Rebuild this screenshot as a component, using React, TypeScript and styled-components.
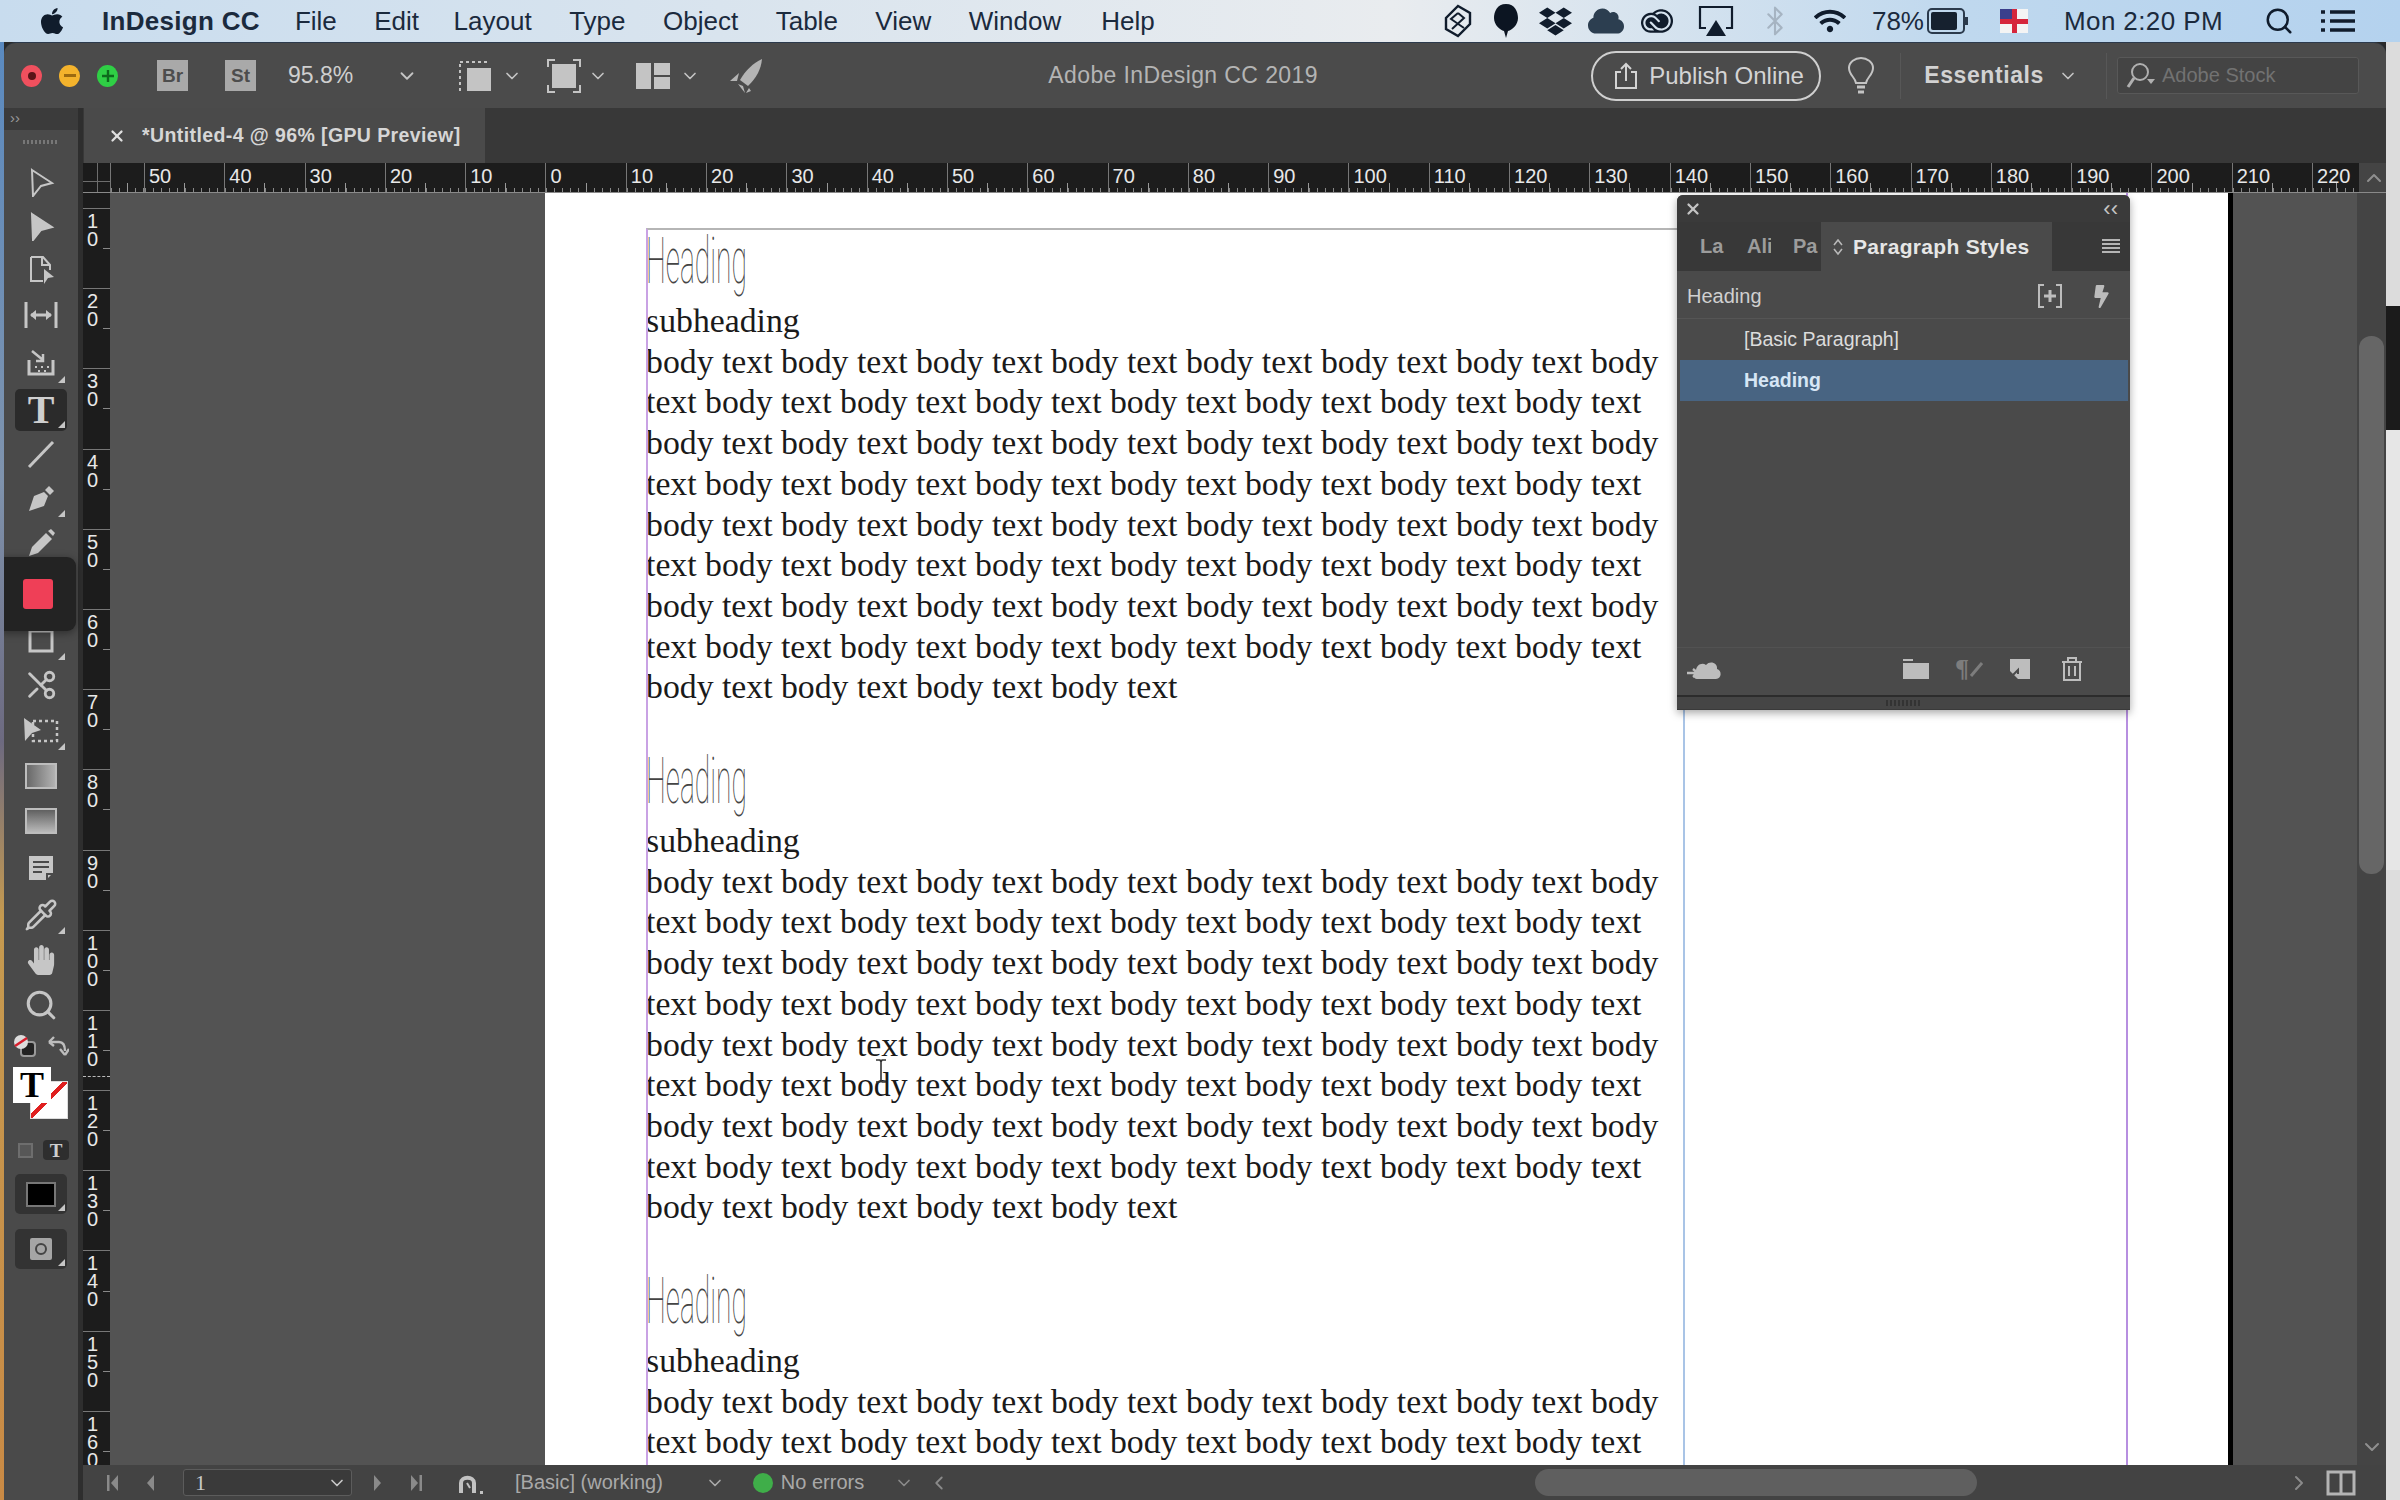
import { ReactNode } from 'react'
import styled, { createGlobalStyle } from 'styled-components'
import { FaApple, FaCloud, FaDropbox, FaHandPaper, FaWifi, FaBolt } from 'react-icons/fa'
import { SiAdobecreativecloud } from 'react-icons/si'
import { Bluetooth, ChevronDown, ChevronLeft, ChevronRight, ChevronUp, Pipette, Scissors, Search, X } from 'lucide-react'

const GlobalStyle = createGlobalStyle`
  html, body { margin: 0; padding: 0; background: #2a2a2a; }
  * { box-sizing: border-box; }
`

const SANS = `"Liberation Sans", Arial, sans-serif`
const SERIF = `"Liberation Serif", "Times New Roman", serif`

const Root = styled.div`
  width: 2400px;
  height: 1500px;
  display: flex;
  flex-direction: column;
  overflow: hidden;
  font-family: ${SANS};
`

/* mac menu bar */
const MenuBar = styled.div`
  height: 42px;
  flex: none;
  display: flex;
  align-items: center;
  padding-left: 37px;
  color: #1b2a3d;
  font-size: 26px;
  background: linear-gradient(90deg, #c8dcee 0%, #d9e4ee 30%, #e9ecef 58%, #bfd8ee 82%, #b4d2ee 100%);
`
const MenuItem = styled.span<{ $bold?: boolean; $ml?: number; $wide?: boolean }>`
  margin-left: ${p => p.$ml ?? 37.5}px;
  font-weight: ${p => (p.$bold ? 700 : 400)};
  letter-spacing: ${p => (p.$wide ? 0.4 : p.$bold ? 0.3 : 0)}px;
  white-space: nowrap;
`
const MenuRight = styled.div`
  margin-left: auto;
  margin-right: 43px;
  display: flex;
  align-items: center;
  height: 100%;
`
const MenuIcon = styled.span<{ $w: number; $ml?: number }>`
  width: ${p => p.$w}px;
  margin-left: ${p => p.$ml ?? 0}px;
  display: flex;
  justify-content: center;
  align-items: center;
  color: #101c2c;
`

const Desk = styled.div`
  flex: 1;
  min-height: 0;
  display: flex;
`
const LeftStrip = styled.div`
  width: 4px;
  flex: none;
  background: linear-gradient(180deg, #5a8ac0 0%, #7f93ad 30%, #6d6a80 48%, #c59a50 60%, #c98a45 100%);
`
const RightStrip = styled.div`
  width: 14px;
  flex: none;
  display: flex;
  flex-direction: column;
`
const StripBand = styled.div<{ $h: number; $c: string }>`
  height: ${p => p.$h}px;
  background: ${p => p.$c};
  flex: none;
`
const Window = styled.div`
  flex: 1;
  min-width: 0;
  display: flex;
  flex-direction: column;
  background: #2e2e2e;
  border-radius: 12px 12px 0 0;
  overflow: hidden;
  border-top: 1px solid #2c3a4c;
`

/* app bar */
const AppBar = styled.div`
  height: 65px;
  flex: none;
  display: flex;
  align-items: center;
  background: #4b4b4b;
`
const Traffic = styled.span<{ $c: string; $ml: number }>`
  width: 21px;
  height: 22px;
  border-radius: 50%;
  background: ${p => p.$c};
  margin-left: ${p => p.$ml}px;
  flex: none;
  display: flex;
  align-items: center;
  justify-content: center;
`
const Bridge = styled.span<{ $ml: number }>`
  width: 31px;
  height: 31px;
  flex: none;
  margin-left: ${p => p.$ml}px;
  background: #a9a9a9;
  color: #4d4d4d;
  font-size: 19px;
  font-weight: 700;
  display: flex;
  align-items: center;
  justify-content: center;
`
const ZoomValue = styled.span`
  margin-left: 32px;
  width: 108px;
  color: #cfcfcf;
  font-size: 23px;
`
const BarIcon = styled.span<{ $ml: number }>`
  margin-left: ${p => p.$ml}px;
  display: flex;
  align-items: center;
  flex: none;
  color: #c4c4c4;
`
const Title = styled.div`
  flex: 1;
  margin-left: 12px;
  text-align: center;
  color: #b4b4b4;
  font-size: 23px;
  letter-spacing: 0.4px;
`
const PublishButton = styled.div`
  width: 230px;
  height: 50px;
  flex: none;
  border: 2px solid #cfcfcf;
  border-radius: 25px;
  display: flex;
  align-items: center;
  padding-left: 20px;
  gap: 10px;
  color: #d4d4d4;
  font-size: 24px;
`
const BarDivider = styled.span<{ $ml: number }>`
  width: 1px;
  height: 46px;
  margin-left: ${p => p.$ml}px;
  background: #575757;
  flex: none;
`
const Essentials = styled.span`
  margin-left: 23px;
  color: #d2d2d2;
  font-size: 23px;
  font-weight: 700;
  letter-spacing: 0.6px;
`
const StockSearch = styled.div`
  width: 242px;
  height: 37px;
  margin-left: 10px;
  margin-right: 27px;
  flex: none;
  display: flex;
  align-items: center;
  padding-left: 8px;
  gap: 6px;
  background: #444444;
  border: 1px solid #585858;
  border-radius: 3px;
  color: #727272;
  font-size: 20px;
`

/* left tools */
const Workspace = styled.div`
  flex: 1;
  min-height: 0;
  display: flex;
`
const ToolPanel = styled.div`
  width: 74px;
  flex: none;
  position: relative;
  display: flex;
  flex-direction: column;
  align-items: center;
  background: #4a4a4a;
  margin-right: 5px;
`
const ToolHead = styled.div`
  width: 100%;
  height: 22px;
  background: #3b3b3b;
  color: #9a9a9a;
  font-size: 15px;
  line-height: 20px;
  padding-left: 6px;
  flex: none;
`
const ToolGrip = styled.div`
  width: 36px;
  height: 4px;
  margin: 10px 0 16px;
  flex: none;
  background: repeating-linear-gradient(90deg, #777 0 2px, transparent 2px 4px);
`
const Tool = styled.div<{ $h: number; $active?: boolean }>`
  width: 52px;
  height: ${p => p.$h}px;
  flex: none;
  position: relative;
  display: flex;
  align-items: center;
  justify-content: center;
  color: #c6c6c6;
  background: ${p => (p.$active ? '#2b2b2b' : 'transparent')};
  border-radius: 5px;
`
const Corner = styled.span`
  position: absolute;
  right: 2px;
  bottom: 3px;
  width: 0;
  height: 0;
  border-left: 7px solid transparent;
  border-bottom: 7px solid #c6c6c6;
`
const TypeGlyph = styled.span<{ $size: number; $c?: string }>`
  font-family: ${SERIF};
  font-weight: 700;
  font-size: ${p => p.$size}px;
  line-height: 1;
  color: ${p => p.$c ?? '#cfcfcf'};
`
const ToolSpacer = styled.div<{ $h: number }>`
  height: ${p => p.$h}px;
  flex: none;
`
const Mirror = styled.span`
  display: flex;
  transform: scaleX(-1);
`
const Swatch = styled.div`
  position: absolute;
  left: -4px;
  top: 449px;
  width: 76px;
  height: 74px;
  background: #232323;
  border-radius: 0 9px 9px 0;
  display: flex;
  align-items: center;
  justify-content: center;
  box-shadow: 0 2px 8px rgba(0, 0, 0, 0.4);
`
const SwatchFill = styled.span`
  width: 30px;
  height: 30px;
  background: #ef3f57;
  border-radius: 3px;
`
const MiniRow = styled.div<{ $h: number }>`
  width: 56px;
  height: ${p => p.$h}px;
  flex: none;
  display: flex;
  align-items: center;
  justify-content: space-between;
  color: #bdbdbd;
`
const FillStroke = styled.div`
  width: 56px;
  height: 64px;
  flex: none;
  position: relative;
  margin-top: 2px;
`
const StrokeBox = styled.span`
  position: absolute;
  left: 17px;
  top: 14px;
  width: 38px;
  height: 38px;
  background: linear-gradient(135deg, #fff 0 44%, #e02020 44% 52%, #fff 52% 100%);
  border: 1px solid #ddd;
`
const FillBox = styled.span`
  position: absolute;
  left: 0;
  top: 0;
  width: 38px;
  height: 36px;
  background: #fff;
  display: flex;
  align-items: center;
  justify-content: center;
`
const ModeBox = styled.span<{ $dark?: boolean }>`
  width: 26px;
  height: 20px;
  border-radius: 4px;
  display: flex;
  align-items: center;
  justify-content: center;
  background: ${p => (p.$dark ? '#2e2e2e' : 'transparent')};
`
const ModeEmpty = styled.span`
  width: 15px;
  height: 15px;
  margin-left: 5px;
  border: 2px solid #6e6e6e;
  background: #575757;
`
const DarkTool = styled.div<{ $mt: number }>`
  width: 52px;
  height: 40px;
  flex: none;
  margin-top: ${p => p.$mt}px;
  border-radius: 5px;
  background: #333333;
  position: relative;
  display: flex;
  align-items: center;
  justify-content: center;
`
const BlackBox = styled.span`
  width: 30px;
  height: 25px;
  background: #000;
  border: 2px solid #777;
`
const ViewBox = styled.span`
  width: 22px;
  height: 22px;
  background: #a5a5a5;
  border-radius: 2px;
  display: flex;
  align-items: center;
  justify-content: center;
  color: #444;
`

/* document area */
const Main = styled.div`
  flex: 1;
  min-width: 0;
  display: flex;
  flex-direction: column;
`
const TabRow = styled.div`
  height: 55px;
  flex: none;
  display: flex;
  padding-left: 1px;
  background: #383838;
`
const DocTab = styled.div`
  width: 401px;
  display: flex;
  align-items: center;
  padding-left: 24px;
  gap: 16px;
  background: #4a4a4a;
  color: #d6d6d6;
  font-size: 19.5px;
  font-weight: 700;
  letter-spacing: 0.4px;
`
const RulerRow = styled.div`
  height: 30px;
  flex: none;
  display: flex;
  background: #1c1c1c;
  border-bottom: 1px solid #8a8a8a;
  overflow: hidden;
`
const RulerCorner = styled.div`
  width: 27px;
  flex: none;
  background:
    linear-gradient(#777, #777) 0 18px / 100% 1px no-repeat,
    linear-gradient(#777, #777) 14px 0 / 1px 100% no-repeat,
    #1c1c1c;
  opacity: 0.9;
`
const HCell = styled.div<{ $w: number }>`
  width: ${p => p.$w}px;
  flex: none;
  padding-left: 4px;
  border-left: 1px solid #777;
  color: #e8e8e8;
  font-size: 20px;
  line-height: 27px;
  white-space: nowrap;
  background:
    linear-gradient(#999, #999) 50% 100% / 1px 9px no-repeat,
    repeating-linear-gradient(90deg, #888 0 1px, transparent 1px 8px) 0 100% / 100% 4px no-repeat;
`
const CanvasRow = styled.div`
  flex: 1;
  min-height: 0;
  display: flex;
`
const VRuler = styled.div`
  width: 27px;
  flex: none;
  position: relative;
  overflow: hidden;
  background: #1c1c1c;
  padding-top: 15px;
`
const VCell = styled.div`
  height: 80.2px;
  border-top: 1px solid #777;
  padding-top: 3px;
  padding-left: 4px;
  color: #e8e8e8;
  font-size: 20px;
  line-height: 18px;
  background: linear-gradient(#888, #888) 100% 50% / 7px 1px no-repeat;
`
const Digit = styled.div``
const CursorMark = styled.div`
  position: absolute;
  left: 0;
  right: 0;
  top: 883px;
  border-top: 1px dashed #bbb;
`
const Pasteboard = styled.div`
  flex: 1;
  min-width: 0;
  position: relative;
  overflow: hidden;
  display: flex;
  padding-left: 435px;
  background: #535353;
`
const Page = styled.div`
  width: 1688px;
  height: 100%;
  flex: none;
  display: flex;
  align-items: stretch;
  padding-left: 101px;
  padding-top: 35px;
  background: #fff;
  border-right: 5px solid #000;
`
const TextFrame = styled.div`
  width: 1039px;
  flex: none;
  overflow: hidden;
  border-left: 2px solid #c9a2e4;
  border-top: 2px solid #b5b5b5;
  border-right: 2px solid #a9c4e6;
`
const MarginColumn = styled.div`
  width: 443px;
  flex: none;
  margin-top: -35px;
  border-right: 2px solid #b78fe0;
`
const Block = styled.div`
  margin-bottom: 42px;
  font-family: ${SERIF};
  font-size: 33.75px;
  line-height: 40.7px;
  color: #1a1a1a;
  white-space: nowrap;
  margin-left: -2px;
`
const HeadingText = styled.div`
  height: 71px;
  font-family: Roboto, ${SANS};
  font-weight: 100;
  font-size: 64px;
  line-height: 63px;
  color: #444444;
  transform: scaleX(0.44);
  transform-origin: 0 0;
`
const IBeam = styled.svg`
  position: absolute;
  left: 764px;
  top: 866px;
`
const VScroll = styled.div`
  width: 29px;
  flex: none;
  position: relative;
  display: flex;
  justify-content: center;
  background: #444444;
  color: #8f8f8f;
`
const VThumb = styled.div`
  position: absolute;
  left: 2px;
  right: 2px;
  top: 143px;
  height: 538px;
  border-radius: 12px;
  background: #666666;
`
const ArrowSlot = styled.span`
  position: absolute;
  bottom: 2px;
`
const RulerEnd = styled.div`
  width: 29px;
  flex: none;
  display: flex;
  align-items: center;
  justify-content: center;
  background: #444;
  color: #8f8f8f;
`
const StatusBar = styled.div`
  height: 35px;
  flex: none;
  display: flex;
  align-items: center;
  background: #434343;
  color: #a8a8a8;
  font-size: 20px;
`
const StatusItem = styled.span<{ $ml: number }>`
  margin-left: ${p => p.$ml}px;
  flex: none;
  display: flex;
  align-items: center;
  color: #8a8a8a;
`
const PageBox = styled.div`
  width: 169px;
  height: 27px;
  margin-left: 28px;
  flex: none;
  display: flex;
  align-items: center;
  justify-content: space-between;
  padding: 0 4px 0 11px;
  border: 1px solid #5c5c5c;
  border-radius: 3px;
  background: #3a3a3a;
  color: #c8c8c8;
  font-family: ${SERIF};
  font-size: 22px;
`
const StatusText = styled.span<{ $ml: number }>`
  margin-left: ${p => p.$ml}px;
  flex: none;
  color: #a9a9a9;
`
const GreenDot = styled.span`
  width: 20px;
  height: 20px;
  margin-left: 28px;
  flex: none;
  border-radius: 50%;
  background: #3fae49;
`
const HThumb = styled.div`
  width: 442px;
  height: 27px;
  margin-left: 585px;
  flex: none;
  border-radius: 14px;
  background: #5f5f5f;
`

/* floating paragraph styles panel */
const StylesPanel = styled.div`
  position: absolute;
  left: 1567px;
  top: 2px;
  width: 453px;
  height: 515px;
  display: flex;
  flex-direction: column;
  background: #4a4a4a;
  border-radius: 6px 6px 2px 2px;
  box-shadow: 0 3px 8px rgba(0, 0, 0, 0.35);
  color: #d8d8d8;
`
const PanelTop = styled.div`
  height: 27px;
  flex: none;
  display: flex;
  align-items: center;
  justify-content: space-between;
  padding: 0 12px 0 7px;
  background: #3a3a3a;
  border-radius: 6px 6px 0 0;
  color: #c4c4c4;
  font-size: 22px;
`
const PanelTabs = styled.div`
  height: 49px;
  flex: none;
  display: flex;
  align-items: center;
  background: #383838;
`
const SideTab = styled.span<{ $w: number; $pl: number }>`
  width: ${p => p.$w}px;
  padding-left: ${p => p.$pl}px;
  flex: none;
  color: #9c9c9c;
  font-size: 20px;
  font-weight: 700;
  overflow: hidden;
`
const ActiveTab = styled.div`
  width: 231px;
  height: 100%;
  flex: none;
  display: flex;
  align-items: center;
  padding-left: 11px;
  gap: 9px;
  background: #4a4a4a;
  color: #e6e6e6;
  font-size: 21px;
  font-weight: 700;
  letter-spacing: 0.3px;
  white-space: nowrap;
`
const Burger = styled.span`
  margin-left: auto;
  margin-right: 10px;
  width: 18px;
  height: 15px;
  background: repeating-linear-gradient(180deg, #b5b5b5 0 2px, transparent 2px 4px);
`
const CurrentRow = styled.div`
  height: 48px;
  flex: none;
  display: flex;
  align-items: center;
  padding-left: 10px;
  padding-top: 3px;
  border-bottom: 1px solid #555;
  font-size: 20px;
  color: #d0d0d0;
`
const RowIcon = styled.span<{ $ml?: number }>`
  margin-left: ${p => p.$ml ?? 0}px;
  display: flex;
  align-items: center;
  flex: none;
  color: #bcbcbc;
`
const StyleRow = styled.div<{ $selected?: boolean }>`
  height: 41px;
  flex: none;
  display: flex;
  align-items: center;
  padding-left: 64px;
  margin: 0 2px 0 3px;
  font-size: 19.5px;
  font-weight: ${p => (p.$selected ? 700 : 400)};
  color: ${p => (p.$selected ? '#d6e6f5' : '#dcdcdc')};
  background: ${p => (p.$selected ? '#486482' : 'transparent')};
`
const PanelFooter = styled.div`
  margin-top: auto;
  height: 48px;
  flex: none;
  display: flex;
  align-items: center;
  padding-left: 10px;
  padding-bottom: 5px;
  border-top: 1px solid #525252;
  color: #bdbdbd;
`
const PanelResize = styled.div`
  height: 15px;
  flex: none;
  display: flex;
  justify-content: center;
  padding-top: 3px;
  background: #454545;
  border-top: 2px solid #2c2c2c;
  border-bottom: 1px solid #3a3a3a;
`
const ResizeGrip = styled.span`
  width: 36px;
  height: 6px;
  background: repeating-linear-gradient(90deg, #333 0 2px, transparent 2px 4px);
`
const Pilcrow = styled.span`
  font-family: ${SERIF};
  font-size: 26px;
  font-weight: 700;
  color: #7d7d7d;
  line-height: 1;
`

function Ico({ size = 30, w, h, children }: { size?: number; w?: number; h?: number; children: ReactNode }) {
  const width = w ?? size
  const height = h ?? size
  return (
    <svg width={width} height={height} viewBox={`0 0 ${width} ${height}`} fill="none" stroke="currentColor" strokeWidth={2}>
      {children}
    </svg>
  )
}

const SelectIcon = ({ filled }: { filled?: boolean }) => (
  <Ico><path d="M6 3 L26 16 L15 19 L7 29 Z" fill={filled ? 'currentColor' : 'none'} /></Ico>
)
const PageIcon = () => (
  <Ico>
    <path d="M5 3 H17 L24 11 V16 M5 3 V27 H17" />
    <path d="M16 3 V11 H24" />
    <path d="M18 15 L28 23 L22 24 L18 30 Z" fill="currentColor" stroke="none" />
  </Ico>
)
const GapIcon = () => (
  <Ico w={36}>
    <path d="M3 2 V28 M33 2 V28 M8 15 H28" strokeWidth={3} />
    <path d="M7 15 L13 10 V20 Z M29 15 L23 10 V20 Z" fill="currentColor" stroke="none" />
  </Ico>
)
const CollectorIcon = () => (
  <Ico>
    <path d="M6 4 L17 13 M17 7 V14 H10" strokeWidth={2.5} />
    <path d="M3 13 V27 H27 V13" strokeWidth={3} />
    <path d="M9 20 h2 M15 20 h2 M21 20 h2 M12 24 h2 M18 24 h2" strokeWidth={2} />
  </Ico>
)
const LineIcon = () => <Ico><path d="M3 28 L27 3" strokeWidth={3} /></Ico>
const PenIcon = () => (
  <Ico>
    <path d="M3 28 L8 13 L18 9 L22 13 L18 23 Z" fill="currentColor" stroke="none" />
    <path d="M19 7 L23 3 L28 8 L24 12 Z" fill="currentColor" stroke="none" />
  </Ico>
)
const PencilIcon = () => (
  <Ico>
    <path d="M3 28 L6 19 L20 5 L26 11 L12 25 Z" fill="currentColor" stroke="none" />
    <path d="M22 3 L25 1 L29 5 L27 8 Z" fill="currentColor" stroke="none" />
  </Ico>
)
const RectIcon = () => <Ico><rect x="4" y="5" width="22" height="20" strokeWidth={3} /></Ico>
const FreeIcon = () => (
  <Ico w={36}>
    <rect x="10" y="6" width="24" height="20" strokeDasharray="3 3" strokeWidth={2.5} />
    <path d="M1 3 L18 15 L9 18 L2 26 Z" fill="currentColor" stroke="none" />
  </Ico>
)
const GradientIcon = ({ id, dir }: { id: string; dir: 'h' | 'v' }) => (
  <svg width="32" height="26" viewBox="0 0 32 26">
    <defs>
      <linearGradient id={id} x1="0" y1="0" x2={dir === 'h' ? 1 : 0} y2={dir === 'h' ? 0 : 1}>
        <stop offset="0" stopColor={dir === 'h' ? '#666' : '#5c5c5c'} />
        <stop offset="1" stopColor={dir === 'h' ? '#b5b5b5' : '#bdbdbd'} />
      </linearGradient>
    </defs>
    <rect x="1" y="1" width="30" height="24" fill={`url(#${id})`} stroke="#bdbdbd" strokeWidth="2" />
  </svg>
)
const NoteIcon = () => (
  <Ico>
    <path d="M3 3 H27 V20 L20 27 H3 Z" fill="currentColor" stroke="none" />
    <path d="M7 9 H23 M7 14 H23 M7 19 H16" stroke="#4a4a4a" strokeWidth={2} />
    <path d="M21 27 V21 H27" stroke="#4a4a4a" />
  </Ico>
)
const NavLeft = ({ bar }: { bar?: boolean }) => (
  <Ico w={12} h={22}>
    {bar && <path d="M1 3 V19" strokeWidth={3} />}
    <path d="M11 3 L4 11 L11 19 Z" fill="currentColor" stroke="none" />
  </Ico>
)
const NavRight = ({ bar }: { bar?: boolean }) => (
  <Ico w={12} h={22}>
    {bar && <path d="M11 3 V19" strokeWidth={3} />}
    <path d="M1 3 L8 11 L1 19 Z" fill="currentColor" stroke="none" />
  </Ico>
)

const RULER_LABELS = [50, 40, 30, 20, 10, 0, 10, 20, 30, 40, 50, 60, 70, 80, 90, 100, 110, 120, 130, 140, 150, 160, 170, 180, 190, 200, 210, 220]
const V_LABELS = [10, 20, 30, 40, 50, 60, 70, 80, 90, 100, 110, 120, 130, 140, 150, 160]

const odd = 'body text '.repeat(7) + 'body'
const even = 'text body '.repeat(7) + 'text'
const last = 'body text '.repeat(4).trim()
const BODY_LINES = [odd, even, odd, even, odd, even, odd, even, last]

// the third block runs off the bottom of the page, only its first lines show
function Section({ lines = BODY_LINES.length }: { lines?: number }) {
  return (
    <Block>
      <HeadingText>Heading</HeadingText>
      <div>subheading</div>
      {BODY_LINES.slice(0, lines).map((line, i) => <div key={i}>{line}</div>)}
    </Block>
  )
}

export default function App() {
  return (
    <Root>
      <GlobalStyle />
      <MenuBar>
        <FaApple size={30} color="#101c2c" />
        <MenuItem $bold $ml={35}>InDesign CC</MenuItem>
        <MenuItem $ml={35}>File</MenuItem>
        <MenuItem>Edit</MenuItem>
        <MenuItem $ml={34.5}>Layout</MenuItem>
        <MenuItem>Type</MenuItem>
        <MenuItem>Object</MenuItem>
        <MenuItem>Table</MenuItem>
        <MenuItem>View</MenuItem>
        <MenuItem>Window</MenuItem>
        <MenuItem $ml={40}>Help</MenuItem>
        <MenuRight>
          <MenuIcon $w={48}>
            <Ico w={32} h={34}>
              <path d="M16 2 L28 9 V20 L16 32 L4 25 V14 Z" strokeWidth={2.4} />
              <path d="M16 9 L22 14 L10 25 M16 9 L9 15 L22 24" strokeWidth={2} />
            </Ico>
          </MenuIcon>
          <MenuIcon $w={48}>
            <svg width="26" height="36" viewBox="0 0 26 36"><path d="M13 1 C22 1 25 9 25 15 C25 22 19 27 15 28 L13 35 L11 28 C7 27 1 22 1 15 C1 9 4 1 13 1 Z" fill="#0c1522" /></svg>
          </MenuIcon>
          <MenuIcon $w={52}><FaDropbox size={33} /></MenuIcon>
          <MenuIcon $w={48}><FaCloud size={36} color="#2c3e50" /></MenuIcon>
          <MenuIcon $w={54}><SiAdobecreativecloud size={32} /></MenuIcon>
          <MenuIcon $w={64}>
            <Ico w={36} h={34}>
              <path d="M8 24 H2 V3 H34 V24 H28" strokeWidth={2.2} />
              <path d="M18 16 L28 32 H8 Z" fill="currentColor" stroke="none" />
            </Ico>
          </MenuIcon>
          <MenuIcon $w={54}><Bluetooth size={32} color="#a6b4c2" strokeWidth={1.6} /></MenuIcon>
          <MenuIcon $w={56}><FaWifi size={32} /></MenuIcon>
          <MenuItem $ml={14}>78%</MenuItem>
          <MenuIcon $w={48}>
            <svg width="42" height="26" viewBox="0 0 42 26">
              <rect x="1" y="1" width="36" height="24" rx="4" fill="none" stroke="#2b3a4c" strokeWidth="2" />
              <rect x="4" y="4" width="26" height="18" rx="2" fill="#16212f" />
              <rect x="38" y="9" width="3" height="8" fill="#2b3a4c" />
            </svg>
          </MenuIcon>
          <MenuIcon $w={32} $ml={26}>
            <svg width="28" height="24" viewBox="0 0 28 24">
              <rect width="28" height="24" fill="#f4f4f4" />
              <rect x="12" width="5" height="24" fill="#d6263c" />
              <rect y="10" width="28" height="5" fill="#d6263c" />
              <rect width="12" height="10" fill="#3b3f8c" />
            </svg>
          </MenuIcon>
          <MenuItem $ml={34} $wide>Mon 2:20 PM</MenuItem>
          <MenuIcon $w={32} $ml={40}><Search size={30} strokeWidth={2} /></MenuIcon>
          <MenuIcon $w={38} $ml={24}>
            <Ico w={36} h={26}>
              <path d="M10 4 H35 M10 13 H35 M10 22 H35" strokeWidth={3.4} />
              <path d="M1 4 H5 M1 13 H5 M1 22 H5" strokeWidth={3.4} />
            </Ico>
          </MenuIcon>
        </MenuRight>
      </MenuBar>
      <Desk>
        <LeftStrip />
        <Window>
          <AppBar>
            <Traffic $c="#f0505e" $ml={17}><svg width="8" height="8"><circle cx="4" cy="4" r="4" fill="#5a1418" /></svg></Traffic>
            <Traffic $c="#f4b32c" $ml={17}><svg width="12" height="4"><rect width="12" height="3" fill="#9c6a10" /></svg></Traffic>
            <Traffic $c="#2fcf45" $ml={17}><svg width="12" height="12"><path d="M6 0 V12 M0 6 H12" stroke="#0d6a1c" strokeWidth="2.4" /></svg></Traffic>
            <Bridge $ml={39}>Br</Bridge>
            <Bridge $ml={37}>St</Bridge>
            <ZoomValue>95.8%</ZoomValue>
            <BarIcon $ml={0}><ChevronDown size={22} /></BarIcon>
            <BarIcon $ml={40}>
              <Ico size={34}>
                <rect x="9" y="9" width="24" height="23" fill="currentColor" stroke="none" />
                <path d="M2 5 V32 M2 3 H30" strokeDasharray="3 3" strokeWidth={2} />
              </Ico>
            </BarIcon>
            <BarIcon $ml={10}><ChevronDown size={20} /></BarIcon>
            <BarIcon $ml={25}>
              <Ico size={34}>
                <rect x="5" y="5" width="24" height="24" fill="currentColor" stroke="none" />
                <path d="M1 8 V1 H8 M26 1 H33 V8 M33 26 V33 H26 M8 33 H1 V26" strokeWidth={2} />
              </Ico>
            </BarIcon>
            <BarIcon $ml={7}><ChevronDown size={20} /></BarIcon>
            <BarIcon $ml={28}>
              <svg width="34" height="26" viewBox="0 0 34 26" fill="#c4c4c4">
                <rect x="0" y="0" width="15" height="26" />
                <rect x="18" y="0" width="16" height="12" />
                <rect x="18" y="14" width="16" height="12" />
              </svg>
            </BarIcon>
            <BarIcon $ml={10}><ChevronDown size={20} /></BarIcon>
            <BarIcon $ml={29}>
              <svg width="34" height="34" viewBox="0 0 34 34" fill="#b4b4b4">
                <path d="M33 0 C32 10 28 18 19 27 L11 21 C16 12 24 4 33 0 Z" />
                <path d="M10 14 L1 22 L8 22 Z M20 29 L17 34 L22 32 Z M14 27 L9 25 L16 34 Z" />
              </svg>
            </BarIcon>
            <Title>Adobe InDesign CC 2019</Title>
            <PublishButton>
              <Ico w={26} h={28}>
                <path d="M8 10 H3 V26 H23 V10 H18" />
                <path d="M13 19 V2 M8 7 L13 2 L18 7" />
              </Ico>
              Publish Online
            </PublishButton>
            <BarIcon $ml={24}>
              <Ico w={32} h={38}>
                <path d="M11 26 C10 20 4 18 4 11 C4 5 10 1 16 1 C22 1 28 5 28 11 C28 18 22 20 21 26 Z" />
                <path d="M12 30 H20 M13 35 H19" strokeWidth={3} />
              </Ico>
            </BarIcon>
            <BarDivider $ml={23} />
            <Essentials>Essentials</Essentials>
            <BarIcon $ml={14}><ChevronDown size={20} /></BarIcon>
            <BarDivider $ml={28} />
            <StockSearch>
              <Ico w={30} h={28}>
                <circle cx="14" cy="10" r="8" stroke="#b0b0b0" />
                <path d="M8 16 L2 25" stroke="#b0b0b0" strokeWidth={3} />
                <path d="M21 17 H29 L25 22 Z" fill="#b0b0b0" stroke="none" />
              </Ico>
              Adobe Stock
            </StockSearch>
          </AppBar>
          <Workspace>
            <ToolPanel>
              <ToolHead>››</ToolHead>
              <ToolGrip />
              <Tool $h={44}><SelectIcon /></Tool>
              <Tool $h={43}><SelectIcon filled /></Tool>
              <Tool $h={44}><PageIcon /></Tool>
              <Tool $h={47}><GapIcon /></Tool>
              <Tool $h={48}><CollectorIcon /><Corner /></Tool>
              <ToolSpacer $h={3} />
              <Tool $h={42} $active><TypeGlyph $size={40}>T</TypeGlyph><Corner /></Tool>
              <Tool $h={45}><LineIcon /></Tool>
              <Tool $h={44}><PenIcon /><Corner /></Tool>
              <Tool $h={46}><PencilIcon /></Tool>
              <ToolSpacer $h={53} />
              <Tool $h={44}><RectIcon /><Corner /></Tool>
              <Tool $h={44}><Mirror><Scissors size={34} strokeWidth={2} /></Mirror></Tool>
              <Tool $h={46}><FreeIcon /><Corner /></Tool>
              <Tool $h={45}><GradientIcon id="g1" dir="h" /></Tool>
              <Tool $h={46}><GradientIcon id="g2" dir="v" /></Tool>
              <Tool $h={48}><NoteIcon /></Tool>
              <Tool $h={45}><Pipette size={34} strokeWidth={1.8} /><Corner /></Tool>
              <Tool $h={45}><FaHandPaper size={30} /></Tool>
              <Tool $h={45}><Search size={34} strokeWidth={2.2} /></Tool>
              <MiniRow $h={38}>
                <svg width="24" height="24" viewBox="0 0 24 24">
                  <rect x="8" y="8" width="14" height="14" rx="3" fill="#222" stroke="#999" strokeWidth="2" />
                  <circle cx="8" cy="8" r="7" fill="#ddd" />
                  <path d="M2 12 L14 4" stroke="#d81e2c" strokeWidth="2.4" />
                </svg>
                <svg width="22" height="22" viewBox="0 0 22 22" fill="none" stroke="#bdbdbd" strokeWidth="2.4">
                  <path d="M2 7 H12 C16 7 18 10 18 16" />
                  <path d="M2 7 L7 2 M2 7 L7 11 M18 20 L13 14 M18 20 L22 14" />
                </svg>
              </MiniRow>
              <FillStroke>
                <StrokeBox />
                <FillBox><TypeGlyph $size={36} $c="#000">T</TypeGlyph></FillBox>
              </FillStroke>
              <MiniRow $h={38}>
                <ModeEmpty />
                <ModeBox $dark><TypeGlyph $size={19}>T</TypeGlyph></ModeBox>
              </MiniRow>
              <DarkTool $mt={5}><BlackBox /><Corner /></DarkTool>
              <DarkTool $mt={15}>
                <ViewBox>
                  <svg width="14" height="14" viewBox="0 0 14 14" fill="none" stroke="#444" strokeWidth="2"><circle cx="7" cy="7" r="5" /></svg>
                </ViewBox>
                <Corner />
              </DarkTool>
              <Swatch><SwatchFill /></Swatch>
            </ToolPanel>
            <Main>
              <TabRow>
                <DocTab>
                  <X size={18} strokeWidth={3} color="#e0e0e0" />
                  *Untitled-4 @ 96% [GPU Preview]
                </DocTab>
              </TabRow>
              <RulerRow>
                <RulerCorner />
                <HCell $w={34} />
                {RULER_LABELS.map((n, i) => <HCell key={i} $w={n === 220 ? 47 : 80.3}>{n}</HCell>)}
                <RulerEnd><ChevronUp size={24} /></RulerEnd>
              </RulerRow>
              <CanvasRow>
                <VRuler>
                  {V_LABELS.map(n => (
                    <VCell key={n}>
                      {String(n).split('').map((d, i) => <Digit key={i}>{d}</Digit>)}
                    </VCell>
                  ))}
                  <CursorMark />
                </VRuler>
                <Pasteboard>
                  <Page>
                    <TextFrame>
                      <Section />
                      <Section />
                      <Section lines={2} />
                    </TextFrame>
                    <MarginColumn />
                  </Page>
                  <IBeam width="14" height="24" viewBox="0 0 14 24" fill="none" stroke="#333" strokeWidth="1.6">
                    <path d="M2 1 H6 L7 3 L8 1 H12 M7 3 V21 M2 23 H6 L7 21 L8 23 H12" />
                  </IBeam>
                  <StylesPanel>
                    <PanelTop>
                      <X size={18} strokeWidth={3} />
                      <span>‹‹</span>
                    </PanelTop>
                    <PanelTabs>
                      <SideTab $w={47} $pl={23}>La</SideTab>
                      <SideTab $w={47} $pl={23}>Ali</SideTab>
                      <SideTab $w={50} $pl={22}>Pa</SideTab>
                      <ActiveTab>
                        <svg width="12" height="18" viewBox="0 0 12 18" fill="none" stroke="#b8b8b8" strokeWidth="1.6"><path d="M2 7 L6 2 L10 7 M2 11 L6 16 L10 11" /></svg>
                        Paragraph Styles
                      </ActiveTab>
                      <Burger />
                    </PanelTabs>
                    <CurrentRow>
                      Heading
                      <RowIcon $ml={275}>
                        <Ico w={26} h={26}>
                          <path d="M7 2 H2 V24 H7 M19 2 H24 V24 H19" />
                          <path d="M13 7 V19 M7 13 H19" strokeWidth={3} />
                        </Ico>
                      </RowIcon>
                      <RowIcon $ml={27}><FaBolt size={23} /></RowIcon>
                    </CurrentRow>
                    <StyleRow>[Basic Paragraph]</StyleRow>
                    <StyleRow $selected>Heading</StyleRow>
                    <PanelFooter>
                      <svg width="36" height="24" viewBox="0 0 36 24" fill="#bdbdbd">
                        <path d="M10 22 C6 22 5 16 9 14 C9 8 15 5 19 8 C23 3 31 6 30 12 C35 13 35 22 29 22 Z" />
                        <path d="M0 16 H10 M6 12 L11 16 L6 20" stroke="#bdbdbd" strokeWidth="2.4" fill="none" />
                      </svg>
                      <RowIcon $ml={180}>
                        <svg width="26" height="20" viewBox="0 0 26 20" fill="#bdbdbd"><path d="M0 2 H10 V0 H0 Z M0 4 H26 V20 H0 Z" /></svg>
                      </RowIcon>
                      <RowIcon $ml={26}>
                        <Pilcrow>¶</Pilcrow>
                        <svg width="16" height="18" viewBox="0 0 16 18"><path d="M2 16 L13 3" stroke="#7d7d7d" strokeWidth="3" /></svg>
                      </RowIcon>
                      <RowIcon $ml={25}>
                        <svg width="20" height="20" viewBox="0 0 20 20"><path d="M0 0 H20 V20 H8 L0 12 Z" fill="#bdbdbd" /><path d="M3 16 L8 11 V15" stroke="#4a4a4a" strokeWidth="2" fill="none" /></svg>
                      </RowIcon>
                      <RowIcon $ml={31}>
                        <svg width="22" height="24" viewBox="0 0 22 24" fill="none" stroke="#bdbdbd" strokeWidth="2"><path d="M1 5 H21 M7 5 V1 H15 V5 M3 5 V23 H19 V5 M8 9 V19 M14 9 V19" /></svg>
                      </RowIcon>
                    </PanelFooter>
                    <PanelResize><ResizeGrip /></PanelResize>
                  </StylesPanel>
                </Pasteboard>
                <VScroll>
                  <VThumb />
                  <ArrowSlot><ChevronDown size={24} /></ArrowSlot>
                </VScroll>
              </CanvasRow>
              <StatusBar>
                <StatusItem $ml={24}><NavLeft bar /></StatusItem>
                <StatusItem $ml={24}><NavLeft /></StatusItem>
                <PageBox>1<ChevronDown size={20} color="#c8c8c8" /></PageBox>
                <StatusItem $ml={21}><NavRight /></StatusItem>
                <StatusItem $ml={25}><NavRight bar /></StatusItem>
                <StatusItem $ml={36}>
                  <svg width="28" height="24" viewBox="0 0 28 24" fill="none" stroke="#c2c2c2" strokeWidth="4"><path d="M3 22 V12 C3 5 16 5 16 12 V22" /><path d="M9 12 L12 17" strokeWidth="2" /><rect x="22" y="20" width="3" height="3" fill="#c2c2c2" stroke="none" /></svg>
                </StatusItem>
                <StatusText $ml={29}>[Basic] (working)</StatusText>
                <StatusItem $ml={42}><ChevronDown size={20} color="#a9a9a9" /></StatusItem>
                <GreenDot />
                <StatusText $ml={8}>No errors</StatusText>
                <StatusItem $ml={30}><ChevronDown size={20} /></StatusItem>
                <StatusItem $ml={14}><ChevronLeft size={22} /></StatusItem>
                <HThumb />
                <StatusItem $ml={310}><ChevronRight size={24} /></StatusItem>
                <StatusItem $ml={15}>
                  <svg width="30" height="26" viewBox="0 0 30 26" fill="none" stroke="#b4b4b4" strokeWidth="3"><rect x="2" y="2" width="26" height="22" /><path d="M15 2 V24" /></svg>
                </StatusItem>
              </StatusBar>
            </Main>
          </Workspace>
        </Window>
        <RightStrip>
          <StripBand $h={264} $c="#dcdcdc" />
          <StripBand $h={124} $c="#1b1b1b" />
          <StripBand $h={440} $c="#e6e6e6" />
          <StripBand $h={700} $c="#dddddd" />
        </RightStrip>
      </Desk>
    </Root>
  )
}
